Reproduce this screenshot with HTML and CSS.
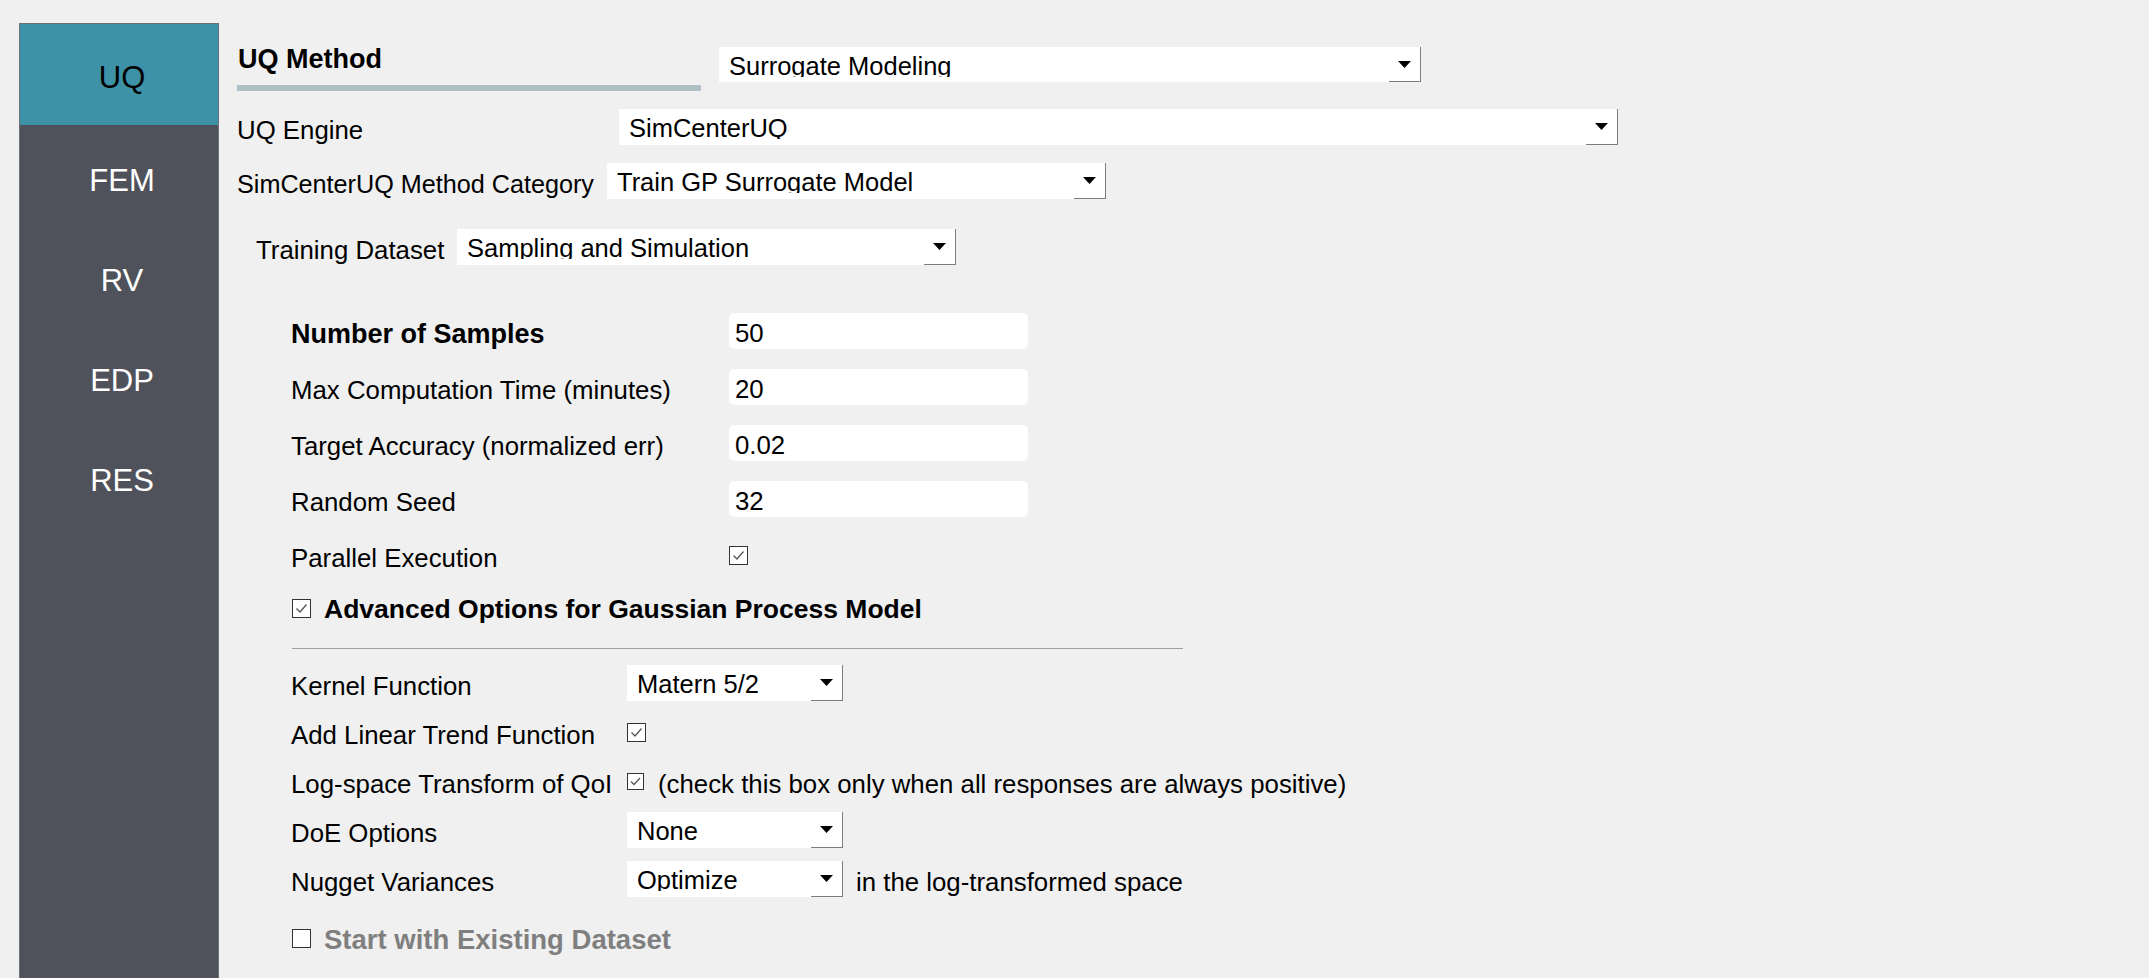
FILE: index.html
```html
<!DOCTYPE html>
<html>
<head>
<meta charset="utf-8">
<link rel="stylesheet" href="styles.css">
</head>
<body>
<div class="app">
  <nav class="sidebar">
    <div class="tab active">UQ</div>
    <div class="tab">FEM</div>
    <div class="tab">RV</div>
    <div class="tab">EDP</div>
    <div class="tab">RES</div>
  </nav>
  <main class="main">
    <div class="method-row">
      <div class="method-title">
        <div class="title-text">UQ Method</div>
        <div class="title-bar"></div>
      </div>
      <div class="combo w-method">
        <div class="combo-text"><span>Surrogate Modeling</span></div>
        <div class="combo-btn"><svg width="13" height="7" viewBox="0 0 13 7"><path d="M0 0H13L6.5 7Z" fill="#000"/></svg></div>
      </div>
    </div>

    <div class="row engine-row">
      <div class="label lbl-engine">UQ Engine</div>
      <div class="combo w-engine">
        <div class="combo-text"><span>SimCenterUQ</span></div>
        <div class="combo-btn"><svg width="13" height="7" viewBox="0 0 13 7"><path d="M0 0H13L6.5 7Z" fill="#000"/></svg></div>
      </div>
    </div>

    <div class="row cat-row">
      <div class="label lbl-cat">SimCenterUQ Method Category</div>
      <div class="combo w-half">
        <div class="combo-text"><span>Train GP Surrogate Model</span></div>
        <div class="combo-btn"><svg width="13" height="7" viewBox="0 0 13 7"><path d="M0 0H13L6.5 7Z" fill="#000"/></svg></div>
      </div>
    </div>

    <div class="row train-row">
      <div class="label lbl-train">Training Dataset</div>
      <div class="combo w-half">
        <div class="combo-text"><span>Sampling and Simulation</span></div>
        <div class="combo-btn"><svg width="13" height="7" viewBox="0 0 13 7"><path d="M0 0H13L6.5 7Z" fill="#000"/></svg></div>
      </div>
    </div>

    <div class="form">
      <div class="frow">
        <div class="flabel bold">Number of Samples</div>
        <div class="field">50</div>
      </div>
      <div class="frow">
        <div class="flabel">Max Computation Time (minutes)</div>
        <div class="field">20</div>
      </div>
      <div class="frow">
        <div class="flabel">Target Accuracy (normalized err)</div>
        <div class="field">0.02</div>
      </div>
      <div class="frow">
        <div class="flabel">Random Seed</div>
        <div class="field">32</div>
      </div>
      <div class="frow">
        <div class="flabel">Parallel Execution</div>
        <span class="check"><svg width="17" height="17" viewBox="0 0 17 17"><polyline points="3.5,8.5 7,12 13.5,4.5" fill="none" stroke="#555" stroke-width="1.3"/></svg></span>
      </div>
    </div>

    <div class="adv-row">
      <span class="check"><svg width="17" height="17" viewBox="0 0 17 17"><polyline points="3.5,8.5 7,12 13.5,4.5" fill="none" stroke="#555" stroke-width="1.3"/></svg></span>
      <span class="adv-text">Advanced Options for Gaussian Process Model</span>
    </div>

    <div class="sep"></div>

    <div class="grid">
      <div class="grow">
        <div class="glabel">Kernel Function</div>
        <div class="combo w-small">
          <div class="combo-text"><span>Matern 5/2</span></div>
          <div class="combo-btn"><svg width="13" height="7" viewBox="0 0 13 7"><path d="M0 0H13L6.5 7Z" fill="#000"/></svg></div>
        </div>
      </div>
      <div class="grow">
        <div class="glabel">Add Linear Trend Function</div>
        <span class="check"><svg width="17" height="17" viewBox="0 0 17 17"><polyline points="3.5,8.5 7,12 13.5,4.5" fill="none" stroke="#555" stroke-width="1.3"/></svg></span>
      </div>
      <div class="grow">
        <div class="glabel">Log-space Transform of QoI</div>
        <span class="check small"><svg width="15" height="15" viewBox="0 0 15 15"><polyline points="3,7.5 6,10.5 12,4" fill="none" stroke="#555" stroke-width="1.3"/></svg></span>
        <span class="note">(check this box only when all responses are always positive)</span>
      </div>
      <div class="grow">
        <div class="glabel">DoE Options</div>
        <div class="combo w-small">
          <div class="combo-text"><span>None</span></div>
          <div class="combo-btn"><svg width="13" height="7" viewBox="0 0 13 7"><path d="M0 0H13L6.5 7Z" fill="#000"/></svg></div>
        </div>
      </div>
      <div class="grow">
        <div class="glabel">Nugget Variances</div>
        <div class="combo w-small">
          <div class="combo-text"><span>Optimize</span></div>
          <div class="combo-btn"><svg width="13" height="7" viewBox="0 0 13 7"><path d="M0 0H13L6.5 7Z" fill="#000"/></svg></div>
        </div>
        <span class="note2">in the log-transformed space</span>
      </div>
    </div>

    <div class="start-row">
      <span class="check"></span>
      <span class="start-text">Start with Existing Dataset</span>
    </div>
  </main>
</div>
</body>
</html>
```

FILE: styles.css
```css
* { box-sizing: border-box; }
html, body { margin: 0; height: 100%; }
body {
  background: #f0f0f0;
  font-family: "Liberation Sans", Arial, sans-serif;
  font-size: 25.8px;
  color: #000;
  overflow: hidden;
}
.app {
  display: flex;
  height: 978px;
  padding-left: 19px;
}
.sidebar {
  width: 200px;
  flex-shrink: 0;
  margin-top: 23px;
  background: #4f525a;
  border: 1px solid #6c7078;
  border-bottom: none;
  display: flex;
  flex-direction: column;
}
.tab {
  height: 100px;
  display: flex;
  align-items: center;
  justify-content: center;
  padding: 12px 0 0 6px;
  color: #fff;
  font-size: 31px;
}
.tab.active {
  height: 101px;
  padding-top: 6px;
  background: #3e92a8;
  color: #000;
}
.main {
  flex: 1;
  padding: 44px 0 0 18px;
}
.method-row {
  display: flex;
  align-items: flex-start;
}
.method-title { width: 464px; }
.title-text {
  font-weight: bold;
  font-size: 27px;
  line-height: 30px;
  padding-left: 1px;
}
.title-bar {
  height: 6px;
  background: #b0bec5;
  margin-top: 11px;
}
.combo {
  display: flex;
  background: #fff;
  height: 36px;
  flex-shrink: 0;
}
.combo-text {
  flex: 1;
  height: 30px;
  overflow: hidden;
  padding: 5px 0 0 10px;
  font-size: 25.5px;
  line-height: 28px;
  white-space: nowrap;
}
.combo-btn {
  width: 32px;
  display: flex;
  align-items: center;
  justify-content: center;
  border-right: 1px solid #7d7d7d;
  border-bottom: 1px solid #7d7d7d;
}
.combo-btn svg { display: block; }
.w-method { width: 702px; height: 35px; margin-left: 18px; margin-top: 3px; }
.w-engine { width: 999px; }
.w-half { width: 499px; }
.w-small { width: 216px; }

.row { display: flex; align-items: center; }
.label { white-space: nowrap; padding-top: 6px; }
.engine-row { margin-top: 18px; }
.lbl-engine { width: 382px; }
.cat-row { margin-top: 18px; }
.lbl-cat { width: 370px; font-size: 25.2px; }
.train-row { margin-top: 30px; padding-left: 19px; }
.lbl-train { width: 201px; }

.form { margin-top: 48px; padding-left: 54px; }
.frow {
  display: flex;
  align-items: center;
  height: 36px;
  margin-bottom: 20px;
}
.flabel { width: 438px; white-space: nowrap; padding-top: 6px; }
.bold { font-weight: bold; font-size: 27px; }
.field {
  width: 299px;
  height: 36px;
  background: #fff;
  border-radius: 5px;
  padding: 4px 0 0 6px;
  display: flex;
  align-items: center;
}
.check {
  width: 19px;
  height: 19px;
  border: 1px solid #333;
  background: #fff;
  display: inline-flex;
  align-items: center;
  justify-content: center;
  flex-shrink: 0;
}
.check.small { width: 17px; height: 17px; }
.check svg { display: block; }

.adv-row {
  display: flex;
  align-items: center;
  height: 30px;
  margin-top: 5px;
  padding-left: 55px;
}
.adv-text {
  font-weight: bold;
  font-size: 26.5px;
  margin-left: 13px;
  padding-top: 3px;
}
.sep {
  margin: 25px 0 0 55px;
  width: 891px;
  height: 1px;
  background: #a0a0a0;
}
.grid { margin-top: 16px; padding-left: 54px; }
.grow {
  display: flex;
  align-items: center;
  height: 36px;
  margin-bottom: 13px;
}
.glabel { width: 336px; white-space: nowrap; padding-top: 6px; }
.note { margin-left: 14px; padding-top: 6px; white-space: nowrap; }
.note2 { margin-left: 13px; padding-top: 6px; white-space: nowrap; }
.start-row {
  display: flex;
  align-items: center;
  height: 36px;
  margin-top: 23px;
  padding-left: 55px;
}
.start-text {
  font-weight: bold;
  font-size: 27.5px;
  color: #7f7f7f;
  margin-left: 13px;
  padding-top: 3px;
}
```
